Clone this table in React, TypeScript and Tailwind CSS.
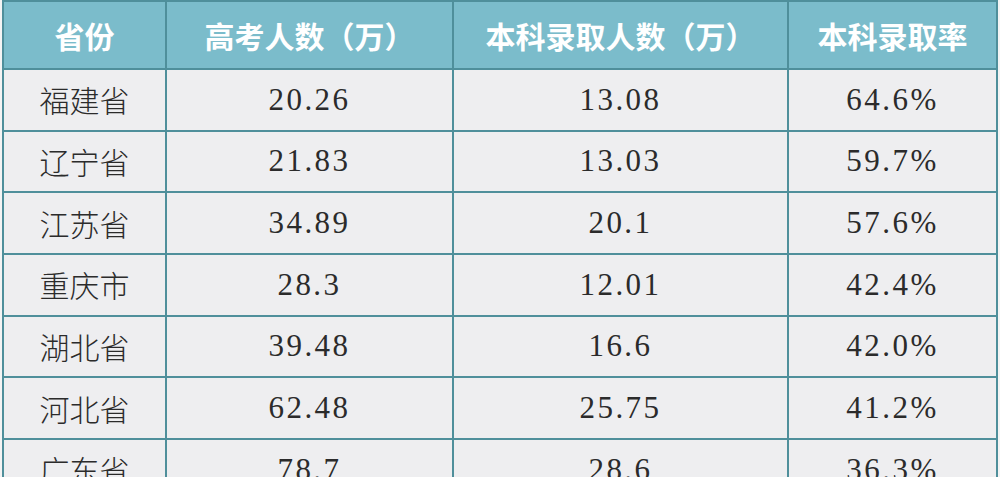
import React from "react";

const rows: [string, string, string, string][] = [
  ["福建省", "20.26", "13.08", "64.6%"],
  ["辽宁省", "21.83", "13.03", "59.7%"],
  ["江苏省", "34.89", "20.1", "57.6%"],
  ["重庆市", "28.3", "12.01", "42.4%"],
  ["湖北省", "39.48", "16.6", "42.0%"],
  ["河北省", "62.48", "25.75", "41.2%"],
  ["广东省", "78.7", "28.6", "36.3%"],
];

const headers = ["省份", "高考人数（万）", "本科录取人数（万）", "本科录取率"];

export default function App() {
  return (
    <div className="h-[477px] w-[1000px] overflow-hidden bg-[#f4f4f4] pl-[2px]">
      <table className="w-[994px] table-fixed border-collapse">
        <colgroup>
          <col className="w-[163px]" />
          <col className="w-[287px]" />
          <col className="w-[335px]" />
          <col className="w-[209px]" />
        </colgroup>
        <thead>
          <tr className="h-[68px] bg-[#7bbccb]">
            {headers.map((h) => (
              <th
                key={h}
                className="border-2 border-[#4f8f9b] text-center font-['Noto_Sans_CJK_SC',sans-serif] text-[30px] font-bold text-white"
              >
                {h}
              </th>
            ))}
          </tr>
        </thead>
        <tbody>
          {rows.map((r) => (
            <tr key={r[0]} className="h-[61.7px] bg-[#eeeef0]">
              <td className="border-2 border-[#4f8f9b] text-center font-['Noto_Sans_CJK_SC',sans-serif] text-[30px] font-light text-[#2b2b2b]">
                {r[0]}
              </td>
              {r.slice(1).map((v, i) => (
                <td
                  key={i}
                  className="border-2 border-[#4f8f9b] text-center font-['Liberation_Serif',serif] text-[31px] tracking-[0.08em] text-[#2b2b2b]"
                >
                  {v}
                </td>
              ))}
            </tr>
          ))}
        </tbody>
      </table>
    </div>
  );
}
